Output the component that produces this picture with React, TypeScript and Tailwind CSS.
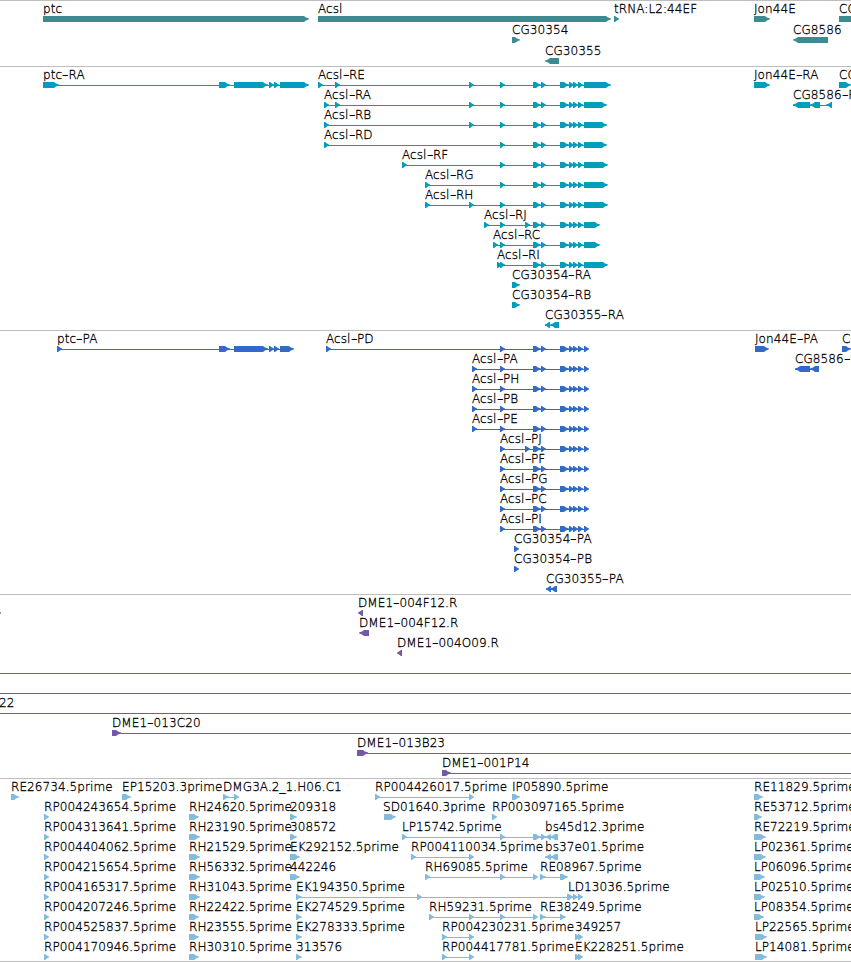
import { Fragment } from "react"

type Block = [start: number, end: number]

type Feature = {
  label?: string
  x?: number
  blocks: Block[]
  reverse?: boolean
  // where the connecting line stops, if it runs past the last block
  lineEnd?: number
}

type TrackProps = {
  rows: Feature[][]
  color: string
  rowClass?: string
}

const VIEW_WIDTH = 851

function f(label: string, blocks: Block[], x = blocks[0][0]): Feature {
  return { label, blocks, x }
}

function rev(label: string, blocks: Block[], x = blocks[0][0]): Feature {
  return { label, blocks, x, reverse: true }
}

const genes: Feature[][] = [
  [
    f("ptc", [[43, 309]]),
    f("Acsl", [[318, 611]]),
    f("tRNA:L2:44EF", [[614, 619]]),
    f("Jon44E", [[754, 770]]),
    f("CG8588", [[839, 900]]),
  ],
  [f("CG30354", [[512, 520]]), rev("CG8586", [[793, 828]])],
  [rev("CG30355", [[545, 559]])],
]

// exons shared by every Acsl transcript
const sharedExons: Block[] = [[533, 541], [541, 546], [560, 569], [569, 574], [573, 578], [578, 583]]

const acslRna = (name: string, starts: number[], end: number) =>
  f(name, [...starts.map((s): Block => [s, s + 5]), ...sharedExons, [584, end]])

const transcripts: Feature[][] = [
  [
    f("ptc-RA", [[43, 59], [219, 230], [234, 268], [269, 274], [274, 279], [280, 309]]),
    acslRna("Acsl-RE", [318, 335, 469, 500], 611),
    f("Jon44E-RA", [[754, 770]]),
    f("CG8588-RA", [[839, 851]]),
  ],
  [acslRna("Acsl-RA", [324, 335, 469, 500], 607), rev("CG8586-RA", [[793, 810], [810, 820], [826, 832]])],
  [acslRna("Acsl-RB", [324, 469, 500], 607)],
  [acslRna("Acsl-RD", [324, 500], 607)],
  [acslRna("Acsl-RF", [402, 500], 608)],
  [acslRna("Acsl-RG", [425, 500], 608)],
  [acslRna("Acsl-RH", [425, 469, 500], 608)],
  [acslRna("Acsl-RJ", [484, 500, 525], 600)],
  [acslRna("Acsl-RC", [493, 500], 600)],
  [acslRna("Acsl-RI", [497, 500], 608)],
  [f("CG30354-RA", [[512, 520]])],
  [f("CG30354-RB", [[512, 520]])],
  [rev("CG30355-RA", [[545, 550], [550, 559]])],
]

const proteins: Feature[][] = [
  [
    f("ptc-PA", [[57, 62], [219, 230], [234, 268], [269, 274], [274, 279], [280, 294]]),
    acslRna("Acsl-PD", [326, 500], 589),
    f("Jon44E-PA", [[755, 769]]),
    f("CG8588-PA", [[842, 851]]),
  ],
  [acslRna("Acsl-PA", [472, 500], 589), rev("CG8586-PA", [[795, 810], [810, 819]])],
  [acslRna("Acsl-PH", [472, 500], 589)],
  [acslRna("Acsl-PB", [472, 500], 589)],
  [acslRna("Acsl-PE", [472, 500], 589)],
  [acslRna("Acsl-PJ", [500, 525], 589)],
  [acslRna("Acsl-PF", [500], 589)],
  [acslRna("Acsl-PG", [500], 589)],
  [acslRna("Acsl-PC", [500], 589)],
  [acslRna("Acsl-PI", [500], 589)],
  [f("CG30354-PA", [[514, 519]])],
  [f("CG30354-PB", [[514, 519]])],
  [rev("CG30355-PA", [[546, 551], [550, 557]])],
]

const clones: Feature[][] = [
  [{ blocks: [[-4, 1]] }, rev("DME1-004F12.R", [[358, 363]])],
  [rev("DME1-004F12.R", [[359, 369]])],
  [rev("DME1-004O09.R", [[397, 402]])],
  [{ blocks: [[-20, -10]], lineEnd: 900 }],
  [{ blocks: [[-20, -10]], lineEnd: 900 }],
  [{ label: "22", x: -1, blocks: [[-20, -10]], lineEnd: 900 }],
  [{ ...f("DME1-013C20", [[112, 121]]), lineEnd: 900 }],
  [{ ...f("DME1-013B23", [[357, 368]]), lineEnd: 900 }],
  [{ ...f("DME1-001P14", [[442, 451]]), lineEnd: 900 }],
]

const ests: Feature[][] = [
  [
    f("RE26734.5prime", [[11, 19]]),
    f("EP15203.3prime", [[122, 131]]),
    f("DMG3A.2_1.H06.C1", [[223, 229], [234, 239]]),
    f("RP004426017.5prime", [[375, 380], [469, 474]]),
    f("IP05890.5prime", [[512, 520]]),
    f("RE11829.5prime", [[754, 763]]),
  ],
  [
    f("RP004243654.5prime", [[44, 49]]),
    f("RH24620.5prime", [[189, 199]]),
    f("209318", [[290, 297]]),
    f("SD01640.3prime", [[384, 396]], 383),
    f("RP003097165.5prime", [[492, 497]]),
    f("RE53712.5prime", [[754, 762]]),
  ],
  [
    f("RP004313641.5prime", [[44, 49]]),
    f("RH23190.5prime", [[189, 200]]),
    f("308572", [[290, 297]]),
    f("LP15742.5prime", [[402, 407], [500, 505], [533, 541], [541, 546]]),
    rev("bs45d12.3prime", [[545, 551], [550, 558]]),
    f("RE72219.5prime", [[754, 766]]),
  ],
  [
    f("RP004404062.5prime", [[44, 49]]),
    f("RH21529.5prime", [[189, 200]]),
    f("EK292152.5prime", [[290, 300]]),
    f("RP004110034.5prime", [[411, 416], [469, 474]]),
    rev("bs37e01.5prime", [[545, 551], [550, 558]]),
    f("LP02361.5prime", [[754, 766]]),
  ],
  [
    f("RP004215654.5prime", [[44, 49]]),
    f("RH56332.5prime", [[189, 200]]),
    f("442246", [[290, 300]]),
    f("RH69085.5prime", [[425, 430], [500, 505], [533, 538]]),
    f("RE08967.5prime", [[540, 546], [560, 568]]),
    f("LP06096.5prime", [[754, 765]]),
  ],
  [
    f("RP004165317.5prime", [[44, 49]]),
    f("RH31043.5prime", [[189, 200]]),
    f("EK194350.5prime", [[296, 302], [417, 422], [567, 573]]),
    f("LD13036.5prime", [[568, 573], [573, 578], [578, 583]]),
    f("LP02510.5prime", [[754, 765]]),
  ],
  [
    f("RP004207246.5prime", [[44, 49]]),
    f("RH22422.5prime", [[189, 199]]),
    f("EK274529.5prime", [[296, 302]]),
    f("RH59231.5prime", [[429, 434], [469, 474], [500, 505], [533, 538]]),
    f("RE38249.5prime", [[540, 546], [560, 566]]),
    f("LP08354.5prime", [[754, 764]]),
  ],
  [
    f("RP004525837.5prime", [[44, 49]]),
    f("RH23555.5prime", [[189, 199]]),
    f("EK278333.5prime", [[296, 302]]),
    f("RP004230231.5prime", [[442, 447], [469, 474]]),
    f("349257", [[575, 580], [578, 583]]),
    f("LP22565.5prime", [[755, 767]]),
  ],
  [
    f("RP004170946.5prime", [[44, 49]]),
    f("RH30310.5prime", [[189, 199]]),
    f("313576", [[296, 302]]),
    f("RP004417781.5prime", [[442, 447], [469, 474]]),
    f("EK228251.5prime", [[575, 580], [578, 583]]),
    f("LP14081.5prime", [[755, 767]]),
  ],
]

function arrowPoints([start, end]: Block, reverse?: boolean) {
  const tip = Math.min(6, end - start)
  // distances back from the point, top edge to bottom edge
  const edge = [[tip - 1, 0], [tip - 3, 1.4], [0, 2.4], [0, 3.2], [tip - 3, 4.6], [tip - 1, 6]]
  const base = reverse ? end : start
  const head = edge.map(([dx, y]) => `${reverse ? start + dx : end - dx},${y}`)
  return `${base},0 ${head.join(" ")} ${base},6`
}

function Glyph({ feature }: { feature: Feature }) {
  const { blocks, reverse, lineEnd } = feature
  const from = blocks[0][0]
  const to = lineEnd ?? blocks[blocks.length - 1][1] - 1
  return (
    <g>
      {(blocks.length > 1 || lineEnd) && (
        <rect x={from} y={3} width={to - from} height={1} shapeRendering="crispEdges" />
      )}
      {blocks.map((block, i) => (
        <polygon key={i} points={arrowPoints(block, reverse)} />
      ))}
    </g>
  )
}

function Label({ text }: { text: string }) {
  return text.split("-").map((part, i) => (
    <Fragment key={i}>
      {i > 0 && <span className="mx-px inline-block scale-x-150">-</span>}
      {part}
    </Fragment>
  ))
}

function Track({ rows, color, rowClass = "h-5" }: TrackProps) {
  return (
    <section className="border-t border-[#bebebe] pt-px">
      {rows.map((row, i) => (
        <div key={i} className={`relative ${rowClass}`}>
          {row.map((feature, j) => (
            <span key={j} className="absolute top-0 leading-[14px]" style={{ left: feature.x }}>
              <Label text={feature.label ?? ""} />
            </span>
          ))}
          <svg
            width={VIEW_WIDTH}
            height={6}
            viewBox={`0 0 ${VIEW_WIDTH} 6`}
            className={`absolute left-0 top-[14px] fill-current ${color}`}
          >
            {row.map((feature, j) => (
              <Glyph key={j} feature={feature} />
            ))}
          </svg>
        </div>
      ))}
    </section>
  )
}

export default function App() {
  return (
    <main className="flex h-[962px] w-[851px] flex-col overflow-hidden border-b border-[#bebebe] bg-white font-['DejaVu_Sans',sans-serif] text-[12px] font-extralight tracking-[0.08px] whitespace-nowrap text-black [-webkit-text-stroke:0.3px_black]">
      <div className="flex flex-col gap-px">
        <Track rows={genes} color="text-[#3b8b91]" rowClass="h-[21px]" />
        <div className="flex flex-col gap-0.5">
          <Track rows={transcripts} color="text-[#009dbf]" />
          <Track rows={proteins} color="text-[#306acb]" />
          <Track rows={clones} color="text-[#7459a8]" />
          <Track rows={ests} color="text-[#83bbdd]" />
        </div>
      </div>
    </main>
  )
}
